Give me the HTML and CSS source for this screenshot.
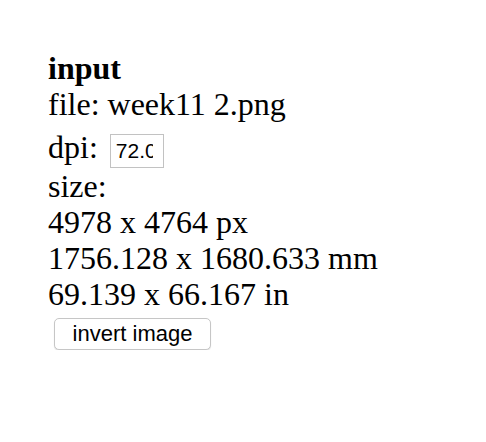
FILE: index.html
```html
<!DOCTYPE html>
<html>
<head>
<meta charset="utf-8">
<link rel="stylesheet" href="styles.css">
</head>
<body>
<div class="panel">
  <div class="title">input</div>
  <div class="line">file: week11 2.png</div>
  <div class="line dpi">dpi: <input class="dpi-input" type="text" value="72.0"></div>
  <div class="line">size:</div>
  <div class="line">4978 x 4764 px</div>
  <div class="line">1756.128 x 1680.633 mm</div>
  <div class="line">69.139 x 66.167 in</div>
  <button class="btn">invert image</button>
</div>
</body>
</html>
```
FILE: styles.css
```css
html, body { margin: 0; background: #fff; }
body { font-family: "Liberation Serif", "Times New Roman", serif; font-size: 32px; color: #000; }
.panel { padding: 51px 0 0 48px; }
.title { font-weight: bold; line-height: 35px; }
.line { line-height: 36px; }
.dpi { padding-top: 7px; }
.dpi-input { vertical-align: baseline; margin: 0 0 0 4px; width: 54px; height: 34px; box-sizing: border-box; border: 1px solid #c2c2c2; padding: 0 10px 0 5px; font-family: "Liberation Sans", Arial, sans-serif; font-size: 21px; color: #000; overflow: hidden; outline: none; }
.btn { display: block; margin: 6px 0 0 6px; height: 32px; width: 157px; font-family: "Liberation Sans", Arial, sans-serif; font-size: 22px; color: #000; background: #fff; border: 1px solid #c6c6c6; border-radius: 5px; box-shadow: 0 1px 1px rgba(0,0,0,0.12); padding: 0; }
```
